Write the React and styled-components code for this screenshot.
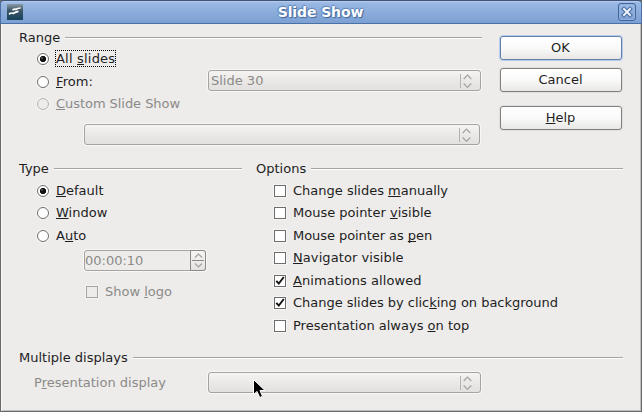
import React from "react";
import styled, { createGlobalStyle, css } from "styled-components";

const Global = createGlobalStyle`
  * { box-sizing: border-box; }
  html, body { margin: 0; overflow: hidden; }
  body { font: 13px/16px "DejaVu Sans", sans-serif; color: #1e1e1e; background: #6b6967; }
  u { text-decoration: underline 1px; text-underline-offset: 1px; text-decoration-skip-ink: none; }
`;

const Dialog = styled.div`
  position: relative;
  width: 642px;
  height: 412px;
  display: flex;
  flex-direction: column;
`;

const TitleBar = styled.header`
  height: 24px;
  flex: none;
  display: grid;
  grid-template-columns: 16px 1fr 18px;
  align-items: center;
  padding: 0 5px 0 6px;
  border: 1px solid #4a6fa5;
  border-top-color: #3e5578;
  border-bottom-color: #4b70a6;
  border-radius: 4px 4px 0 0;
  background: linear-gradient(#a5c0e8, #98b6e2 15%, #7ba0d2);
  box-shadow: inset 0 1px #b3caec;
`;

const Title = styled.h1`
  margin: 0;
  text-align: center;
  font-size: 14px;
  line-height: 18px;
  letter-spacing: -0.1px;
  color: #fff;
  text-shadow: 1px 1px 1px #3f659c, -1px 0 1px #5a80b8, 0 -1px 1px #5a80b8;
`;

const CloseButton = styled.button`
  width: 18px;
  height: 18px;
  padding: 0;
  display: flex;
  align-items: center;
  justify-content: center;
  border: 1px solid #3f659c;
  border-radius: 3px;
  background: linear-gradient(#9dbae4, #7c9fd1);
  box-shadow: inset 0 0 0 1px #94b2de;
`;

const Body = styled.main`
  flex: 1;
  padding: 5px 18px 0 18px;
  background: #edeceb;
  border: solid #6b6967;
  border-width: 0 1px 1px 1px;
  box-shadow: inset 1px 0 #f7f6f5, inset -1px -1px #c0bebc;
`;

const Split = styled.div`
  display: grid;
  grid-template-columns: ${(p) => p.$columns};
  column-gap: ${(p) => p.$gap}px;
  height: ${(p) => p.$height}px;
`;

const Heading = styled.h2`
  margin: 0;
  height: 17px;
  display: flex;
  align-items: center;
  gap: 5px;
  font: inherit;
  white-space: nowrap;
  &::after {
    content: "";
    flex: 1;
    height: 2px;
    margin-top: 1px;
    background: linear-gradient(#a6a4a2 50%, #fdfdfd 50%);
  }
`;

const Choices = styled.div`
  display: flex;
  flex-direction: column;
  padding: ${(p) => p.$top}px 0 0 18px;
`;

const Choice = styled.label`
  height: ${(p) => p.$height || 22}px;
  display: flex;
  align-items: flex-start;
  gap: 7px;
  white-space: nowrap;
  color: ${(p) => (p.$disabled ? "#8b8a88" : "inherit")};
`;

const Caption = styled.span`
  height: 15px;
  margin-top: -2px;
  letter-spacing: ${(p) => p.$tracking || 0}px;
  ${(p) => p.$focused && css`outline: 1px dotted #000;`}
`;

const Radio = styled.span`
  width: 12px;
  height: 12px;
  flex: none;
  border: 1px solid ${(p) => (p.$disabled ? "#b3b1af" : "#6e6c6a")};
  border-radius: 50%;
  background: ${(p) =>
    p.$disabled
      ? "#edeceb"
      : p.$on
      ? "radial-gradient(circle at 4px 4px, #777 0, #111 1.5px, transparent 1.5px), radial-gradient(circle, #111 2.8px, #fff 3.5px)"
      : "#fff"};
  box-shadow: 0 0 0 1px #f6f5f4;
`;

const Check = styled.span`
  width: 12px;
  height: 12px;
  flex: none;
  display: flex;
  border: 1px solid ${(p) => (p.$disabled ? "#a6a4a2" : "#6e6c6a")};
  background: ${(p) => (p.$disabled ? "#edeceb" : "#fff")};
  box-shadow: 0 0 0 1px #f6f5f4;
`;

const Combo = styled.div`
  height: 21px;
  width: ${(p) => p.$width}px;
  flex: none;
  display: flex;
  align-items: center;
  justify-content: space-between;
  padding: 0 8px 0 2px;
  border: 1px solid #a6a4a2;
  border-radius: 3px;
  color: #8b8a88;
  background: linear-gradient(#f5f4f3, #e9e8e6 55%, #e2e1df);
  box-shadow: 0 0 0 1px #f8f7f6;
`;

const ComboArrows = styled.span`
  display: flex;
  padding-left: 2px;
  border-left: 1px solid #b5b3b1;
`;

const ComboLine = styled.div`
  padding: 14px 0 0 65px;
`;

const RangeRow = styled.div`
  height: 22px;
  display: flex;
  justify-content: space-between;
`;

const RangeCombo = styled.div`
  margin: -6px 1px 0 0;
`;

const Buttons = styled.div`
  display: flex;
  flex-direction: column;
  gap: 8px;
  padding-top: 7px;
`;

const Button = styled.button`
  width: 122px;
  height: 24px;
  margin-top: ${(p) => p.$apart || 0}px;
  padding: 0 1px 0 0;
  font: inherit;
  color: inherit;
  border: 1px solid ${(p) => (p.$primary ? "#6082b3" : "#82807e")};
  border-radius: 3px;
  background: linear-gradient(#fff, #fafafa 50%, #e8e7e5);
  box-shadow: 0 0 0 1px ${(p) => (p.$primary ? "#b9cbe4" : "#e0dfdd")};
`;

const Spinner = styled.div`
  width: 122px;
  height: 21px;
  margin: -3px 0 15px 47px;
  display: flex;
  color: #8b8a88;
  border: 1px solid #a6a4a2;
  border-radius: 3px;
  box-shadow: 0 0 0 1px #f8f7f6;
`;

const SpinValue = styled.span`
  flex: 1;
  padding-top: 2px;
`;

const SpinButtons = styled.span`
  width: 16px;
  margin: -1px -1px -1px 0;
  display: flex;
  flex-direction: column;
  border: 1px solid #8b8987;
  border-radius: 0 3px 3px 0;
  background: linear-gradient(#f6f5f4, #e4e3e1);
`;

const Indented = styled.div`
  margin-left: 49px;
`;

const DisplayRow = styled.div`
  display: flex;
  justify-content: space-between;
  align-items: center;
  margin: 6px 142px 0 15px;
  color: #8b8a88;
`;

const Pointer = styled.svg`
  position: absolute;
  left: 252px;
  top: 378px;
`;

const Chevrons = () => (
  <svg width="9" height="14" fill="none" stroke="#a3a19f" strokeWidth="1.2">
    <path d="M0.7 5 4.5 1.2 8.3 5M0.7 9.5 4.5 13.3 8.3 9.5" />
  </svg>
);

const Tick = () => (
  <svg width="10" height="10" fill="none" stroke="#111" strokeWidth="1.9">
    <path d="M1.3 4.8 3.8 7.6 8.8 1" />
  </svg>
);

const Option = ({ on, height, tracking, children }) => (
  <Choice $height={height}>
    <Check>{on && <Tick />}</Check>
    <Caption $tracking={tracking}>{children}</Caption>
  </Choice>
);

const RadioOption = ({ on, height, disabled, focused, tracking, children }) => (
  <Choice $height={height} $disabled={disabled}>
    <Radio $on={on} $disabled={disabled} />
    <Caption $focused={focused} $tracking={tracking}>{children}</Caption>
  </Choice>
);

const Select = ({ width, children }) => (
  <Combo $width={width}>
    <span>{children}</span>
    <ComboArrows><Chevrons /></ComboArrows>
  </Combo>
);

export default function App() {
  return (
    <Dialog>
      <Global />
      <TitleBar>
        <svg width="16" height="16">
          <defs>
            <linearGradient id="app" x1="0" y1="0" x2="0" y2="1">
              <stop offset="0" stopColor="#8a9ba5" />
              <stop offset="0.4" stopColor="#3d5565" />
              <stop offset="1" stopColor="#15445a" />
            </linearGradient>
          </defs>
          <rect width="16" height="16" fill="url(#app)" />
          <g fill="none" stroke="#fff" strokeWidth="1.7">
            <path d="M5.5 6.2Q7.5 4.5 9 5.4 10.5 4 13.5 4" />
            <path d="M2 10.2Q4.5 8.3 6.5 9.4 8.5 7.8 11.5 7.4" />
          </g>
        </svg>
        <Title>Slide Show</Title>
        <CloseButton aria-label="Close">
          <svg width="12" height="12" fill="none">
            <path d="M3 3 9 9M9 3 3 9" stroke="#456ca5" strokeWidth="4" strokeLinecap="square" />
            <path d="M3 3 9 9M9 3 3 9" stroke="#eef3fb" strokeWidth="2" strokeLinecap="square" />
          </svg>
        </CloseButton>
      </TitleBar>
      <Body>
        <Split $columns="463px 122px" $gap={18} $height={131}>
          <section>
            <Heading>Range</Heading>
            <Choices $top={7}>
              <RadioOption on focused height={23} tracking={0.2}>All <u>s</u>lides</RadioOption>
              <RangeRow>
                <RadioOption tracking={0.1}><u>F</u>rom:</RadioOption>
                <RangeCombo><Select width={273}>Slide 30</Select></RangeCombo>
              </RangeRow>
              <RadioOption disabled height={12} tracking={-0.05}><u>C</u>ustom Slide Show</RadioOption>
            </Choices>
            <ComboLine><Select width={396} /></ComboLine>
          </section>
          <Buttons>
            <Button $primary>OK</Button>
            <Button>Cancel</Button>
            <Button $apart={6}><u>H</u>elp</Button>
          </Buttons>
        </Split>
        <Split $columns="223px 367px" $gap={14} $height={189}>
          <section>
            <Heading>Type</Heading>
            <Choices $top={8}>
              <RadioOption on><u>D</u>efault</RadioOption>
              <RadioOption height={23}><u>W</u>indow</RadioOption>
              <RadioOption height={23}>A<u>u</u>to</RadioOption>
              <Spinner>
                <SpinValue>00:00:10</SpinValue>
                <SpinButtons>
                  <svg width="14" height="19" fill="none" stroke="#a3a19f" strokeWidth="1.2">
                    <path d="M4 6.5 7.5 3 11 6.5M4 12.5 7.5 16 11 12.5" />
                    <path d="M1 9.5H13" stroke="#8b8987" strokeWidth="1" />
                  </svg>
                </SpinButtons>
              </Spinner>
              <Indented>
                <Choice $disabled>
                  <Check $disabled />
                  <Caption>Show <u>l</u>ogo</Caption>
                </Choice>
              </Indented>
            </Choices>
          </section>
          <section>
            <Heading>Options</Heading>
            <Choices $top={8}>
              <Option>Change slides <u>m</u>anually</Option>
              <Option height={23}>Mouse pointer <u>v</u>isible</Option>
              <Option tracking={-0.06}>Mouse pointer as <u>p</u>en</Option>
              <Option height={23} tracking={0.08}><u>N</u>avigator visible</Option>
              <Option on tracking={0.08}><u>A</u>nimations allowed</Option>
              <Option on height={23} tracking={-0.02}>Change slides by clic<u>k</u>ing on background</Option>
              <Option>Presentation always <u>o</u>n top</Option>
            </Choices>
          </section>
        </Split>
        <Heading>Multiple displays</Heading>
        <DisplayRow>
          <span>P<u>r</u>esentation display</span>
          <Select width={273} />
        </DisplayRow>
      </Body>
      <Pointer width="16" height="22">
        <path d="M1.5 1.5V16.5L5 13.5 7.8 19.5 10.5 18.3 8 12.5H13Z" fill="#000" stroke="#fff" />
      </Pointer>
    </Dialog>
  );
}
